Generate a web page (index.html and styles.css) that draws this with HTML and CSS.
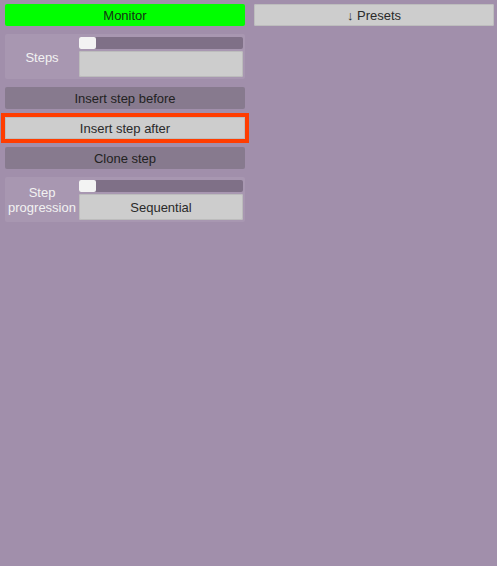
FILE: index.html
```html
<!DOCTYPE html>
<html>
<head>
<meta charset="utf-8">
<link rel="stylesheet" href="styles.css">
</head>
<body>
<div class="app">
  <div class="col">
    <button class="btn btn-monitor">Monitor</button>
    <div class="panel">
      <div class="label">Steps</div>
      <div class="controls">
        <div class="slider"><div class="handle"></div></div>
        <div class="field"></div>
      </div>
    </div>
    <button class="btn btn-dark">Insert step before</button>
    <button class="btn btn-light btn-focus">Insert step after</button>
    <button class="btn btn-dark">Clone step</button>
    <div class="panel">
      <div class="label">Step<br>progression</div>
      <div class="controls">
        <div class="slider"><div class="handle"></div></div>
        <div class="field field-text">Sequential</div>
      </div>
    </div>
  </div>
  <div class="col">
    <button class="btn btn-light">↓ Presets</button>
  </div>
</div>
</body>
</html>
```
FILE: styles.css
```css
html, body {
  margin: 0;
  padding: 0;
  height: 100%;
}
body {
  background: #a18fab;
  font-family: "Liberation Sans", Arial, sans-serif;
  font-size: 13px;
}
.app {
  display: grid;
  grid-template-columns: 240px 240px;
  column-gap: 9px;
  padding: 4px 3px 0 5px;
  align-items: start;
}
.col {
  display: flex;
  flex-direction: column;
  gap: 8px;
}
.btn {
  height: 22px;
  border: none;
  border-radius: 2px;
  font-family: inherit;
  font-size: 13px;
  padding: 0;
  margin: 0;
  color: #2a2a2a;
  display: flex;
  align-items: center;
  justify-content: center;
  width: 100%;
}
.btn-monitor {
  background: #00ff00;
  color: #143314;
}
.btn-light {
  background: #cdcdcd;
  box-shadow: inset 0 0 0 1px #bdbdbd;
}
.btn-dark {
  background: #877a8e;
  color: #222;
}
.btn-focus {
  border-radius: 0;
  outline: 4px solid #ff3d00;
}
.panel {
  background: #a897b1;
  border-radius: 2px;
  display: grid;
  grid-template-columns: 74px 1fr;
  padding: 3px 2px 2px 0;
  height: 45px;
  box-sizing: border-box;
}
.label {
  color: #f2f2f2;
  text-align: center;
  display: flex;
  align-items: center;
  justify-content: center;
  line-height: 15px;
}
.controls {
  display: flex;
  flex-direction: column;
  gap: 2px;
}
.slider {
  height: 12px;
  background: #7f7087;
  border-radius: 2px;
  display: flex;
}
.handle {
  width: 17px;
  height: 12px;
  background: #f3f3f3;
  border-radius: 2px;
}
.field {
  flex: 1;
  background: #cdcdcd;
  border-radius: 2px;
  box-shadow: inset 0 0 0 1px #bcbcbc;
  display: flex;
  align-items: center;
  justify-content: center;
  color: #2a2a2a;
}
```
